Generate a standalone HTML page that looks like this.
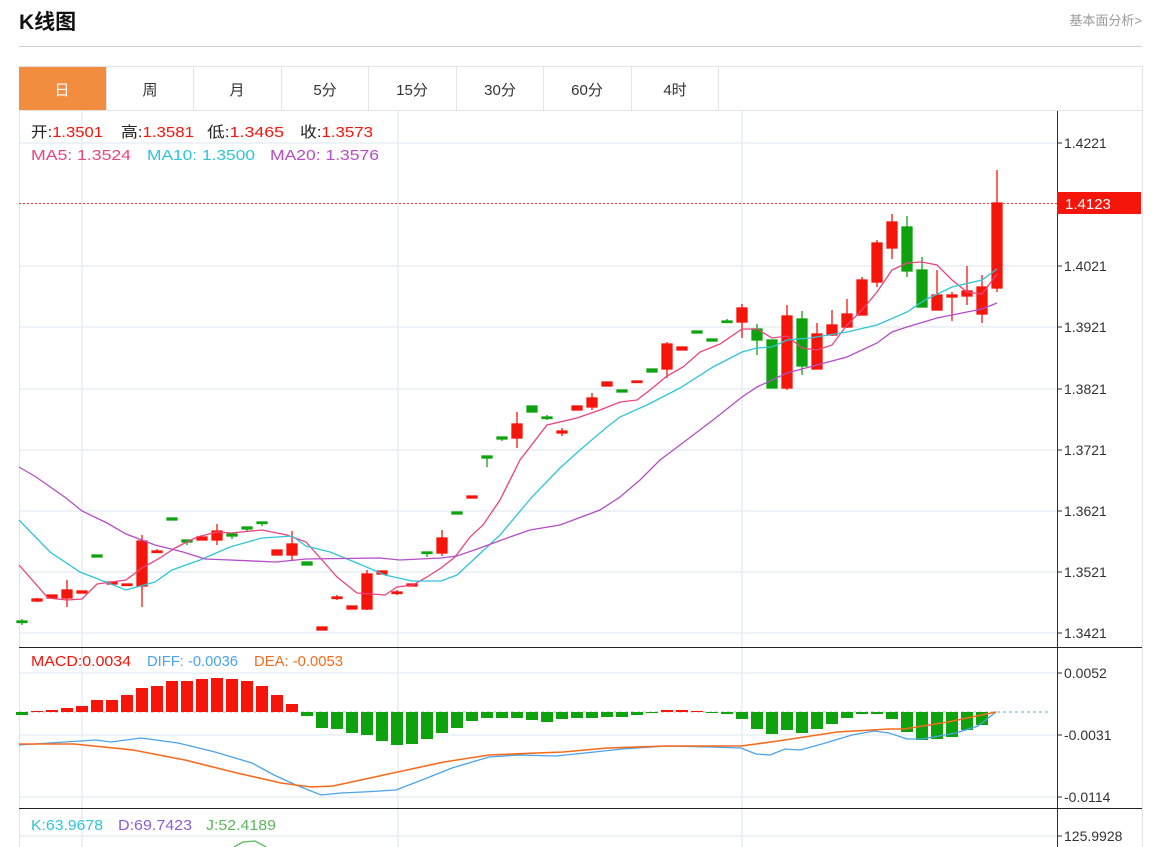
<!DOCTYPE html>
<html><head><meta charset="utf-8"><style>
body{margin:0;background:#fff;width:1161px;height:847px;overflow:hidden;font-family:"Liberation Sans","Noto Sans CJK SC",sans-serif;}
.t{position:absolute;}
</style></head><body>
<div class="t" style="left:19px;top:6px;font-size:21px;font-weight:bold;color:#111;">K线图</div>
<div class="t" style="right:19px;top:10px;font-size:13px;color:#999;">基本面分析&gt;</div>
<div class="t" style="left:19px;top:46px;width:1123px;height:1px;background:#d0d0d0;"></div>
<svg class="t" style="left:0;top:0" width="1161" height="847" font-family="Liberation Sans, Noto Sans CJK SC, sans-serif">
<rect x="19.5" y="66.5" width="1123" height="790" fill="none" stroke="#e3e3e3"/>
<line x1="19" y1="110.5" x2="1142" y2="110.5" stroke="#e3e3e3"/>
<rect x="19" y="67" width="87" height="43" fill="#f28d40"/>
<g stroke="#e3e3e3"><line x1="106.5" y1="67" x2="106.5" y2="110"/><line x1="193.5" y1="67" x2="193.5" y2="110"/><line x1="281.5" y1="67" x2="281.5" y2="110"/><line x1="368.5" y1="67" x2="368.5" y2="110"/><line x1="456.5" y1="67" x2="456.5" y2="110"/><line x1="543.5" y1="67" x2="543.5" y2="110"/><line x1="631.5" y1="67" x2="631.5" y2="110"/><line x1="718.5" y1="67" x2="718.5" y2="110"/></g>
<g font-size="15" text-anchor="middle" fill="#333"><text x="62" y="95" fill="#fff">日</text><text x="150" y="95">周</text><text x="237" y="95">月</text><text x="325" y="95">5分</text><text x="412" y="95">15分</text><text x="500" y="95">30分</text><text x="587" y="95">60分</text><text x="675" y="95">4时</text></g>
<!-- grid -->
<g stroke="#e6eef3" stroke-width="1.5">
<line x1="82" y1="111" x2="82" y2="847"/><line x1="398" y1="111" x2="398" y2="847"/><line x1="742" y1="111" x2="742" y2="847"/>
<line x1="19" y1="143" x2="1057" y2="143"/><line x1="19" y1="266" x2="1057" y2="266"/><line x1="19" y1="327" x2="1057" y2="327"/><line x1="19" y1="389" x2="1057" y2="389"/><line x1="19" y1="450" x2="1057" y2="450"/><line x1="19" y1="511" x2="1057" y2="511"/><line x1="19" y1="572" x2="1057" y2="572"/><line x1="19" y1="633" x2="1057" y2="633"/>
<line x1="19" y1="673" x2="1057" y2="673"/><line x1="19" y1="735" x2="1057" y2="735"/><line x1="19" y1="797" x2="1057" y2="797"/><line x1="19" y1="836" x2="1057" y2="836"/>
</g>
<line x1="1057.5" y1="111" x2="1057.5" y2="847" stroke="#333"/>
<line x1="19" y1="647.5" x2="1142" y2="647.5" stroke="#222"/>
<line x1="19" y1="808.5" x2="1142" y2="808.5" stroke="#222"/>
<line x1="19" y1="203.5" x2="1057" y2="203.5" stroke="#f33" stroke-dasharray="2,2"/>
<rect x="1057" y="192" width="84" height="22" fill="#f5150b"/>
<text x="1065" y="209" font-size="15" fill="#fff">1.4123</text>
<g font-size="14" fill="#333">
<text x="1064" y="148">1.4221</text><text x="1064" y="271">1.4021</text><text x="1064" y="332">1.3921</text><text x="1064" y="394">1.3821</text><text x="1064" y="455">1.3721</text><text x="1064" y="516">1.3621</text><text x="1064" y="577">1.3521</text><text x="1064" y="638">1.3421</text>
<text x="1064" y="678">0.0052</text><text x="1064" y="740">-0.0031</text><text x="1064" y="802">-0.0114</text><text x="1064" y="841">125.9928</text>
</g>
<g stroke="#333"><line x1="1057" y1="143" x2="1062" y2="143"/><line x1="1057" y1="266" x2="1062" y2="266"/><line x1="1057" y1="327" x2="1062" y2="327"/><line x1="1057" y1="389" x2="1062" y2="389"/><line x1="1057" y1="450" x2="1062" y2="450"/><line x1="1057" y1="511" x2="1062" y2="511"/><line x1="1057" y1="572" x2="1062" y2="572"/><line x1="1057" y1="633" x2="1062" y2="633"/><line x1="1057" y1="673" x2="1062" y2="673"/><line x1="1057" y1="735" x2="1062" y2="735"/><line x1="1057" y1="797" x2="1062" y2="797"/><line x1="1057" y1="836" x2="1062" y2="836"/></g>
<!-- legends -->
<g font-size="15" lengthAdjust="spacingAndGlyphs">
<text x="31" y="137" textLength="72" lengthAdjust="spacingAndGlyphs" fill="#222">开:<tspan fill="#f5150b">1.3501</tspan></text>
<text x="121" y="137" textLength="73" lengthAdjust="spacingAndGlyphs" fill="#222">高:<tspan fill="#f5150b">1.3581</tspan></text>
<text x="207" y="137" textLength="77" lengthAdjust="spacingAndGlyphs" fill="#222">低:<tspan fill="#f5150b">1.3465</tspan></text>
<text x="300" y="137" textLength="73" lengthAdjust="spacingAndGlyphs" fill="#222">收:<tspan fill="#f5150b">1.3573</tspan></text>
<text x="31" y="160" textLength="100" lengthAdjust="spacingAndGlyphs" fill="#e9447e">MA5: 1.3524</text>
<text x="147" y="160" textLength="108" lengthAdjust="spacingAndGlyphs" fill="#30c4d8">MA10: 1.3500</text>
<text x="270" y="160" textLength="109" lengthAdjust="spacingAndGlyphs" fill="#b44dc6">MA20: 1.3576</text>
<text x="31" y="666" textLength="100" lengthAdjust="spacingAndGlyphs" fill="#f5150b">MACD:0.0034</text>
<text x="147" y="666" textLength="91" lengthAdjust="spacingAndGlyphs" fill="#4ba3e8">DIFF: -0.0036</text>
<text x="254" y="666" textLength="89" lengthAdjust="spacingAndGlyphs" fill="#f56b1d">DEA: -0.0053</text>
<text x="31" y="830" textLength="72" lengthAdjust="spacingAndGlyphs" fill="#30c4d8">K:63.9678</text>
<text x="118" y="830" textLength="74" lengthAdjust="spacingAndGlyphs" fill="#8a5fd0">D:69.7423</text>
<text x="206" y="830" textLength="70" lengthAdjust="spacingAndGlyphs" fill="#5cb85c">J:52.4189</text>
</g>
<path d="M234,847 L243,842 L255,841 L266,847" fill="none" stroke="#5cb85c" stroke-width="1.3"/>
<!-- candles -->
<g stroke-width="1.3">
<g fill="#f5150b" stroke="#f5150b">
<line x1="37" y1="598" x2="37" y2="602"/><rect x="32" y="599" width="10" height="2"/>
<rect x="47" y="595" width="10" height="3"/>
<line x1="67" y1="580" x2="67" y2="607"/><rect x="62" y="590" width="10" height="8"/>
<rect x="77" y="591" width="10" height="2"/>
<rect x="107" y="582" width="10" height="2"/><rect x="122" y="584" width="10" height="1.5"/>
<line x1="142" y1="535" x2="142" y2="607"/><rect x="137" y="541" width="10" height="45"/>
<line x1="157" y1="549" x2="157" y2="553"/><rect x="152" y="551" width="10" height="1.5"/>
<rect x="197" y="537" width="10" height="3"/>
<line x1="217" y1="524" x2="217" y2="545"/><rect x="212" y="531" width="10" height="9"/>
<rect x="272" y="550" width="10" height="5"/>
<line x1="292" y1="531" x2="292" y2="560"/><rect x="287" y="544" width="10" height="11"/>
<rect x="317" y="627" width="10" height="3"/>
<line x1="337" y1="595" x2="337" y2="600"/><rect x="332" y="597" width="10" height="1.5"/>
<rect x="347" y="606" width="10" height="3"/>
<line x1="367" y1="570" x2="367" y2="610"/><rect x="362" y="574" width="10" height="35"/>
<rect x="377" y="571" width="10" height="3"/>
<line x1="397" y1="590" x2="397" y2="595"/><rect x="392" y="592" width="10" height="1.5"/>
<rect x="407" y="584" width="10" height="2"/>
<line x1="442" y1="530" x2="442" y2="556"/><rect x="437" y="538" width="10" height="15"/>
<rect x="467" y="496" width="10" height="2"/>
<line x1="517" y1="412" x2="517" y2="448"/><rect x="512" y="424" width="10" height="14"/>
<rect x="557" y="431" width="10" height="2"/><line x1="562" y1="428" x2="562" y2="436"/>
<rect x="572" y="406" width="10" height="4"/>
<line x1="592" y1="393" x2="592" y2="410"/><rect x="587" y="398" width="10" height="9"/>
<rect x="602" y="382" width="10" height="4"/>
<rect x="632" y="381" width="10" height="1.5"/>
<line x1="667" y1="342" x2="667" y2="378"/><rect x="662" y="344" width="10" height="25"/>
<rect x="677" y="347" width="10" height="3"/>
<line x1="742" y1="304" x2="742" y2="338"/><rect x="737" y="308" width="10" height="14"/>
<line x1="787" y1="305" x2="787" y2="390"/><rect x="782" y="316" width="10" height="72"/>
<line x1="817" y1="323" x2="817" y2="369"/><rect x="812" y="334" width="10" height="35"/>
<line x1="832" y1="310" x2="832" y2="336"/><rect x="827" y="325" width="10" height="10"/>
<line x1="847" y1="299" x2="847" y2="328"/><rect x="842" y="314" width="10" height="13"/>
<line x1="862" y1="277" x2="862" y2="315"/><rect x="857" y="280" width="10" height="35"/>
<line x1="877" y1="240" x2="877" y2="287"/><rect x="872" y="243" width="10" height="39"/>
<line x1="892" y1="214" x2="892" y2="259"/><rect x="887" y="222" width="10" height="26"/>
<line x1="937" y1="270" x2="937" y2="310"/><rect x="932" y="295" width="10" height="15"/>
<line x1="952" y1="292" x2="952" y2="321"/><rect x="947" y="295" width="10" height="2"/>
<line x1="967" y1="266" x2="967" y2="305"/><rect x="962" y="291" width="10" height="5"/>
<line x1="982" y1="275" x2="982" y2="323"/><rect x="977" y="287" width="10" height="27"/>
<line x1="997" y1="170" x2="997" y2="292"/><rect x="992" y="203" width="10" height="85"/>
</g>
<g fill="#0ea30e" stroke="#0ea30e">
<rect x="17" y="621" width="10" height="1.5"/><line x1="22" y1="619" x2="22" y2="625"/>
<rect x="92" y="555" width="10" height="2"/>
<rect x="167" y="518" width="10" height="2"/>
<rect x="182" y="540" width="10" height="2"/><line x1="187" y1="540" x2="187" y2="545"/>
<rect x="227" y="534" width="10" height="2"/><line x1="232" y1="534" x2="232" y2="539"/>
<rect x="242" y="527" width="10" height="2"/><line x1="247" y1="527" x2="247" y2="532"/>
<rect x="257" y="522" width="10" height="1.5"/><line x1="262" y1="522" x2="262" y2="526"/>
<rect x="302" y="562" width="10" height="3"/>
<rect x="422" y="552" width="10" height="1.5"/><line x1="427" y1="552" x2="427" y2="557"/>
<rect x="452" y="512" width="10" height="2"/>
<rect x="482" y="456" width="10" height="2"/><line x1="487" y1="456" x2="487" y2="467"/>
<rect x="497" y="437" width="10" height="2"/><line x1="502" y1="437" x2="502" y2="441"/>
<rect x="527" y="406" width="10" height="6"/>
<rect x="542" y="417" width="10" height="1.5"/><line x1="547" y1="415" x2="547" y2="420"/>
<rect x="617" y="390" width="10" height="2"/>
<rect x="647" y="369" width="10" height="3"/>
<rect x="692" y="331" width="10" height="2"/>
<rect x="707" y="339" width="10" height="2"/>
<rect x="722" y="321" width="10" height="1.5"/><line x1="727" y1="319" x2="727" y2="323"/>
<line x1="757" y1="324" x2="757" y2="355"/><rect x="752" y="329" width="10" height="11"/>
<rect x="767" y="340" width="10" height="48"/>
<line x1="802" y1="311" x2="802" y2="375"/><rect x="797" y="319" width="10" height="47"/>
<line x1="907" y1="216" x2="907" y2="277"/><rect x="902" y="227" width="10" height="44"/>
<line x1="922" y1="257" x2="922" y2="307"/><rect x="917" y="270" width="10" height="37"/>
</g></g>
<!-- MAs -->
<g fill="none" stroke-width="1.3">
<polyline stroke="#e9447e" points="19,565 48,598 67,600 82,599 97,584 126,580 142,568 160,558 175,548 197,537 217,532 231,533 262,530 287,535 306,542 322,560 337,577 357,593 385,595 397,587 413,585 427,577 441,568 455,557 470,537 483,525 500,500 520,460 547,425 577,418 600,410 620,402 637,400 650,390 667,376 683,367 700,352 720,344 742,329 757,329 772,338 787,336 802,348 817,350 832,345 847,325 862,310 877,292 892,270 907,263 922,262 937,265 952,280 967,292 982,294 997,274"/>
<polyline stroke="#30c4d8" points="19,520 50,552 80,572 126,590 155,582 172,570 200,560 230,547 262,538 292,536 306,546 330,552 357,563 385,575 412,581 441,581 457,575 471,562 500,535 532,497 560,468 580,450 607,427 620,417 647,405 680,388 713,367 742,352 757,348 772,347 787,340 810,338 847,332 877,325 907,312 925,300 952,287 982,280 997,269"/>
<polyline stroke="#b44dc6" points="19,467 36,477 66,498 82,511 107,523 126,534 155,545 183,552 205,559 230,560 276,562 306,559 380,558 400,560 441,558 457,556 480,548 510,537 530,530 560,525 600,510 620,497 640,480 660,460 680,445 713,420 742,397 757,387 787,373 817,365 847,357 877,343 892,332 907,327 937,318 967,312 982,309 997,303"/>
</g>
<!-- MACD -->
<line x1="19" y1="712" x2="1050" y2="712" stroke="#bbb" stroke-dasharray="3,3"/>
<line x1="997" y1="712" x2="1050" y2="712" stroke="#a6d8f0" stroke-width="2" stroke-dasharray="3,3"/>
<g fill="#f5150b">
<rect x="31" y="711" width="12" height="1"/><rect x="46" y="710" width="12" height="2"/><rect x="61" y="708" width="12" height="4"/><rect x="76" y="706" width="12" height="6"/><rect x="91" y="700" width="12" height="12"/><rect x="106" y="700" width="12" height="12"/><rect x="121" y="695" width="12" height="17"/><rect x="136" y="688" width="12" height="24"/><rect x="151" y="686" width="12" height="26"/><rect x="166" y="681" width="12" height="31"/><rect x="181" y="681" width="12" height="31"/><rect x="196" y="679" width="12" height="33"/><rect x="211" y="678" width="12" height="34"/><rect x="226" y="679" width="12" height="33"/><rect x="241" y="681" width="12" height="31"/><rect x="256" y="686" width="12" height="26"/><rect x="271" y="695" width="12" height="17"/><rect x="286" y="704" width="12" height="8"/>
<rect x="661" y="710" width="12" height="2"/><rect x="676" y="710" width="12" height="2"/><rect x="691" y="711" width="12" height="1"/>
</g>
<g fill="#0ea30e">
<rect x="16" y="712" width="12" height="3"/>
<rect x="301" y="712" width="12" height="4"/><rect x="316" y="712" width="12" height="16"/><rect x="331" y="712" width="12" height="17"/><rect x="346" y="712" width="12" height="21"/><rect x="361" y="712" width="12" height="23"/><rect x="376" y="712" width="12" height="29"/><rect x="391" y="712" width="12" height="33"/><rect x="406" y="712" width="12" height="32"/><rect x="421" y="712" width="12" height="27"/><rect x="436" y="712" width="12" height="21"/><rect x="451" y="712" width="12" height="16"/><rect x="466" y="712" width="12" height="9"/><rect x="481" y="712" width="12" height="6"/><rect x="496" y="712" width="12" height="6"/><rect x="511" y="712" width="12" height="6"/><rect x="526" y="712" width="12" height="8"/><rect x="541" y="712" width="12" height="10"/><rect x="556" y="712" width="12" height="7"/><rect x="571" y="712" width="12" height="6"/><rect x="586" y="712" width="12" height="6"/><rect x="601" y="712" width="12" height="5"/><rect x="616" y="712" width="12" height="5"/><rect x="631" y="712" width="12" height="3"/><rect x="646" y="712" width="12" height="1"/>
<rect x="706" y="712" width="12" height="1"/><rect x="721" y="712" width="12" height="2"/><rect x="736" y="712" width="12" height="7"/><rect x="751" y="712" width="12" height="17"/><rect x="766" y="712" width="12" height="22"/><rect x="781" y="712" width="12" height="18"/><rect x="796" y="712" width="12" height="21"/><rect x="811" y="712" width="12" height="17"/><rect x="826" y="712" width="12" height="12"/><rect x="841" y="712" width="12" height="6"/><rect x="856" y="712" width="12" height="2"/><rect x="871" y="712" width="12" height="2"/><rect x="886" y="712" width="12" height="7"/><rect x="901" y="712" width="12" height="20"/><rect x="916" y="712" width="12" height="28"/><rect x="931" y="712" width="12" height="27"/><rect x="946" y="712" width="12" height="25"/><rect x="961" y="712" width="12" height="18"/><rect x="976" y="712" width="12" height="13"/>
</g>
<g fill="none" stroke-width="1.3">
<polyline stroke="#4ba3e8" points="19,745 96,740 111,742 141,738 178,743 215,752 252,763 274,775 296,785 321,795 341,793 363,792 396,790 422,780 452,768 489,757 519,755 556,756 585,753 622,749 667,746 711,747 741,748 756,754 770,755 785,749 800,750 822,744 852,735 874,731 889,733 907,739 922,739 956,733 978,726 996,712"/>
<polyline stroke="#f56b1d" stroke-width="1.6" points="19,744 74,744 133,750 185,760 237,773 281,783 311,787 333,786 393,773 444,762 489,755 563,752 607,748 667,746 741,746 778,741 837,732 889,729 904,729 948,722 996,712"/>
</g>
</svg>
</body></html>
